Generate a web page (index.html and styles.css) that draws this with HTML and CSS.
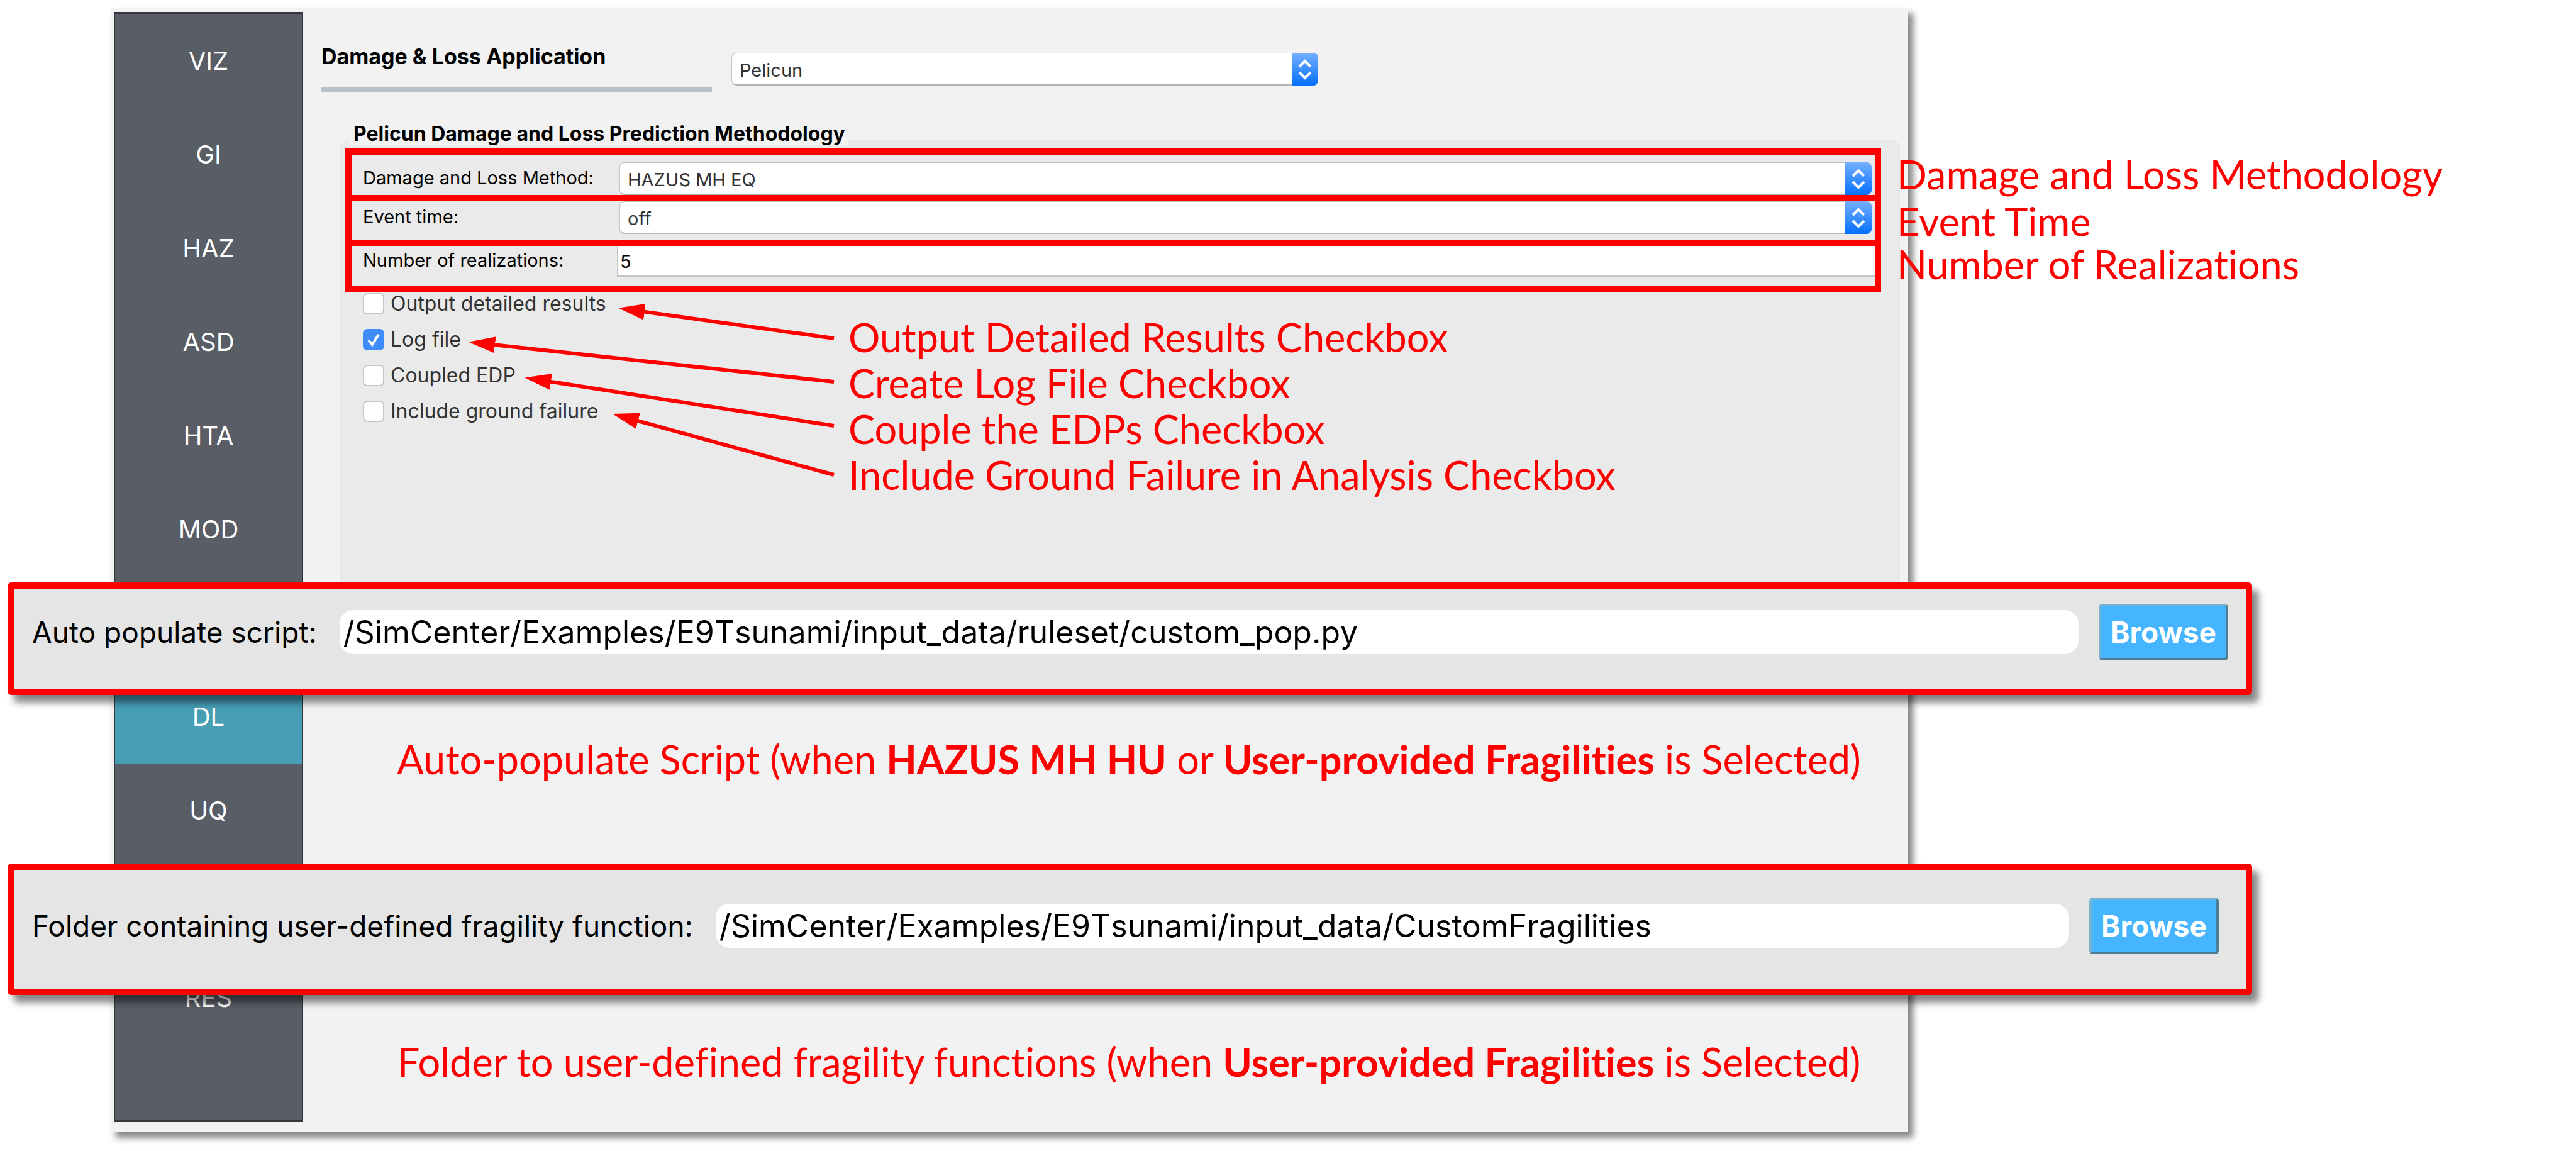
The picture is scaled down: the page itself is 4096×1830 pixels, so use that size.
FILE: index.html
```html
<!DOCTYPE html>
<html lang="en">
<head>
<meta charset="utf-8">
<title>Damage &amp; Loss Application</title>
<link rel="stylesheet" href="styles.css">
</head>
<body>
<main class="stage">
  <section class="window">
    <nav class="sidebar">
      <a href="#viz">VIZ</a>
      <a href="#gi">GI</a>
      <a href="#haz">HAZ</a>
      <a href="#asd">ASD</a>
      <a href="#hta">HTA</a>
      <a href="#mod">MOD</a>
      <span class="slot"></span>
      <a class="active" href="#dl">DL</a>
      <a href="#uq">UQ</a>
      <span class="slot"></span>
      <a href="#res">RES</a>
    </nav>
    <div class="content">
      <header class="app-head">
        <h1><label for="app">Damage &amp; Loss Application</label></h1>
        <div class="select">
          <select id="app"><option>Pelicun</option></select>
          <svg class="stepper" viewBox="0 0 42 52" aria-hidden="true"><path d="M12 22l9-9 9 9M12 31l9 9 9-9"/></svg>
        </div>
      </header>
      <section class="group">
        <h2>Pelicun Damage and Loss Prediction Methodology</h2>
        <div class="rows">
          <div class="row row-method">
            <label for="method">Damage and Loss Method:</label>
            <div class="select">
              <select id="method"><option>HAZUS MH EQ</option></select>
              <svg class="stepper" viewBox="0 0 42 52" aria-hidden="true"><path d="M12 22l9-9 9 9M12 31l9 9 9-9"/></svg>
            </div>
          </div>
          <div class="row row-event">
            <label for="event">Event time:</label>
            <div class="select">
              <select id="event"><option>off</option></select>
              <svg class="stepper" viewBox="0 0 42 52" aria-hidden="true"><path d="M12 22l9-9 9 9M12 31l9 9 9-9"/></svg>
            </div>
          </div>
          <div class="row row-number">
            <label for="number">Number of realizations:</label>
            <input id="number" type="text" value="5">
          </div>
        </div>
        <div class="options">
          <div class="checks">
            <label><input type="checkbox">Output detailed results</label>
            <label><input type="checkbox" checked>Log file</label>
            <label><input type="checkbox">Coupled EDP</label>
            <label><input type="checkbox">Include ground failure</label>
          </div>
          <ul class="notes">
            <li>Output Detailed Results Checkbox</li>
            <li>Create Log File Checkbox</li>
            <li>Couple the EDPs Checkbox</li>
            <li>Include Ground Failure in Analysis Checkbox</li>
          </ul>
          <svg class="arrows" viewBox="0 0 760 300" aria-hidden="true">
            <defs>
              <marker id="head" markerUnits="userSpaceOnUse" markerWidth="42" markerHeight="26" refX="12" refY="13" orient="auto">
                <path class="head" d="M42 13L0 0V26Z"/>
              </marker>
            </defs>
            <path marker-end="url(#head)" d="M749 73L436 29"/>
            <path marker-end="url(#head)" d="M749 142L198 82"/>
            <path marker-end="url(#head)" d="M749 212L287 140"/>
            <path marker-end="url(#head)" d="M749 290L426 201"/>
          </svg>
        </div>
      </section>
    </div>
  </section>

  <ul class="side-notes">
    <li>Damage and Loss Methodology</li>
    <li>Event Time</li>
    <li>Number of Realizations</li>
  </ul>

  <form class="callout callout-script">
    <label for="script">Auto populate script:</label>
    <input id="script" type="text" value="/SimCenter/Examples/E9Tsunami/input_data/ruleset/custom_pop.py">
    <button type="button">Browse</button>
  </form>
  <p class="caption caption-script">Auto-populate Script (when <strong>HAZUS MH HU</strong> or <strong>User-provided Fragilities</strong> is Selected)</p>

  <form class="callout callout-folder">
    <label for="folder">Folder containing user-defined fragility function:</label>
    <input id="folder" type="text" value="/SimCenter/Examples/E9Tsunami/input_data/CustomFragilities">
    <button type="button">Browse</button>
  </form>
  <p class="caption caption-folder">Folder to user-defined fragility functions (when <strong>User-provided Fragilities</strong> is Selected)</p>
</main>
</body>
</html>
```
FILE: styles.css
```css
* { box-sizing: border-box; }
body { margin: 0; background: #fff; color: #000; font-family: Inter, "Liberation Sans", sans-serif; font-size: 29px; }
h1, h2, ul, p { margin: 0; padding: 0; }
ul { list-style: none; }
input, select, button { font: inherit; color: inherit; margin: 0; }

.stage {
  display: grid;
  grid-template-columns: 12fr 164fr 2858fr 547fr 515fr;
  grid-template-rows: minmax(914px, auto) auto auto auto auto;
  padding: 12px 0 30px;
}

.window {
  grid-column: 3;
  grid-row: 1 / 6;
  display: flex;
  align-items: stretch;
  padding: 7px 0 16px 6px;
  background: #f2f2f2;
  box-shadow: 8px 9px 10px rgba(0, 0, 0, .48);
}
.sidebar {
  flex: none;
  width: 299px;
  background: #595d66;
  border: 1px solid #33373d;
  border-width: 3px 1px;
}
.sidebar a, .slot {
  display: flex;
  align-items: center;
  justify-content: center;
  height: 149px;
  color: #fff;
  font-size: 40px;
  text-decoration: none;
}
.sidebar .active { background: #479eb5; }
.content { flex: 1; min-width: 0; }

.app-head {
  display: grid;
  grid-template-columns: 621fr 31fr 933fr 938fr;
  align-items: start;
  padding-left: 30px;
}
.app-head h1 {
  padding: 49px 0 28px;
  border-bottom: 8px solid #b5c2c9;
  font-size: 34px;
  line-height: 43px;
}
.app-head .select { grid-column: 3; margin-top: 65px; }

.select { position: relative; height: 52px; }
.select select {
  appearance: none;
  width: 100%;
  height: 100%;
  padding: 4px 50px 0 12px;
  border: 1px solid #c4c4c4;
  border-bottom: 2px solid #b4b4b4;
  border-radius: 8px;
  background: #fff;
  color: #333;
}
.stepper {
  position: absolute;
  top: 0;
  right: 0;
  width: 42px;
  height: 52px;
  border-radius: 0 8px 8px 0;
  background: linear-gradient(#74b0ff, #0470ff);
  fill: none;
  stroke: #fff;
  stroke-width: 4;
  pointer-events: none;
}

.group {
  margin: 76px 13px 0 60px;
  height: 760px;
  padding: 0 29px 0 7px;
  border-radius: 12px;
  border: 1px solid #e6e6e6;
  background: #eaeaea;
}
.group h2 {
  width: fit-content;
  margin: -30px 0 5px 7px;
  padding: 0 6px;
  background: #f2f2f2;
  font-size: 32px;
  line-height: 37px;
}

.row {
  display: grid;
  grid-template-columns: 408px 1fr;
  border: 10px solid #f00;
  overflow: hidden;
}
.row + .row { margin-top: -10px; }
.row label { display: flex; align-items: center; padding-bottom: 4px; }
.row-method { padding: 12px 5px 0 18px; }
.row-event { padding: 0 5px 9px 18px; }
.row-number { grid-template-columns: 404px 1fr; padding: 0 0 15px 18px; }
.row input {
  height: 49px;
  min-width: 0;
  padding: 2px 4px 0;
  border: 1px solid #c4c4c4;
  border-width: 0 0 2px 1px;
  background: #fff;
}

.options {
  position: relative;
  display: grid;
  grid-template-columns: 772px 1fr;
  align-items: start;
  padding-left: 28px;
}
.checks { display: grid; gap: 22px; }
.checks label { display: flex; align-items: center; gap: 10px; height: 35px; color: #333; font-size: 32px; }
.checks input {
  appearance: none;
  width: 34px;
  height: 34px;
  border: 2px solid #c6c6c6;
  border-radius: 7px;
  background: #fff;
}
.checks input:checked {
  border-color: #3f8cfb;
  background: #3f8cfb url("data:image/svg+xml,%3Csvg xmlns='http://www.w3.org/2000/svg' viewBox='0 0 30 30'%3E%3Cpath d='M7 16l6 7L23 7' fill='none' stroke='white' stroke-width='4'/%3E%3C/svg%3E");
}
.arrows {
  position: absolute;
  left: 28px;
  top: 0;
  width: 760px;
  height: 300px;
  fill: none;
  stroke: #f00;
  stroke-width: 6;
}
.arrows .head { fill: #f00; stroke: none; }

.notes, .side-notes, .caption {
  color: #f00;
  font-family: Lato, "Open Sans", sans-serif;
  font-size: 63px;
  font-variant-ligatures: none;
  white-space: nowrap;
}
.notes { padding-top: 34px; line-height: 73px; }
.side-notes {
  grid-column: 4 / 6;
  grid-row: 1;
  position: relative;
  margin-left: -18px;
  padding-top: 231px;
  line-height: 68px;
}
.side-notes li:first-child { margin-bottom: 7px; }

.callout {
  grid-column: 2 / 5;
  position: relative;
  display: flex;
  align-items: center;
  gap: 32px;
  border: 10px solid #f00;
  border-radius: 6px;
  background: #e5e5e5;
  box-shadow: 10px 12px 12px rgba(0, 0, 0, .48);
  font-size: 46px;
}
.callout-script { grid-row: 2; padding: 24px 28px 45px 29px; }
.callout-folder { grid-row: 4; padding: 44px 43px 55px 29px; }
.callout label { padding-right: 4px; }
.callout input {
  flex: 1;
  min-width: 0;
  height: 70px;
  padding: 0 6px;
  border: 0;
  border-radius: 22px;
  background: #fff;
  font-size: 50px;
  font-kerning: none;
}
.callout button {
  width: 206px;
  height: 90px;
  padding: 0;
  border: 4px solid;
  border-color: #74b2cd #4d7e93 #4d7e93 #74b2cd;
  border-radius: 6px;
  background: #44b5fe;
  color: #fff;
  font-weight: 700;
}
.caption {
  position: relative;
  grid-column: 3;
  padding-left: 380px;
  line-height: 72px;
  text-align: center;
}
.caption-script { grid-row: 3; padding-top: 66px; padding-bottom: 130px; }
.caption-folder { grid-row: 5; padding-top: 70px; padding-bottom: 76px; }
```
